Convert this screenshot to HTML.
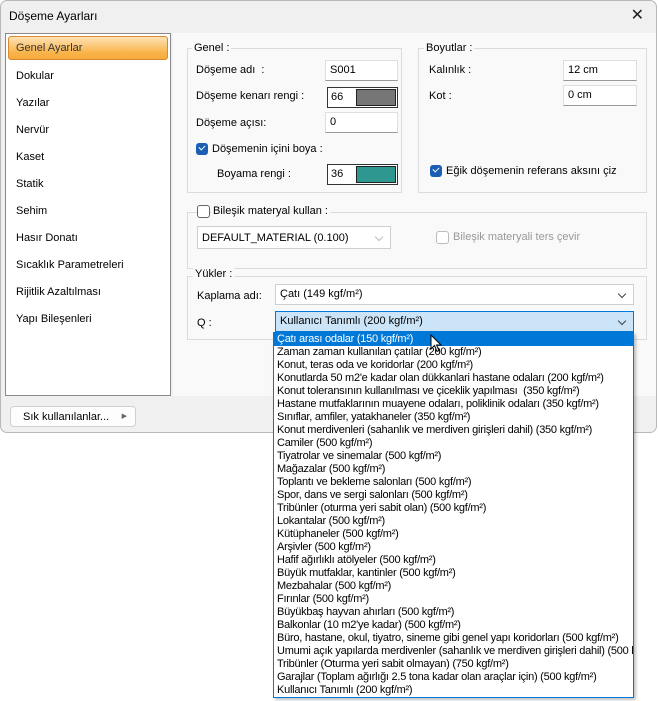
<!DOCTYPE html>
<html><head><meta charset="utf-8"><style>
*{box-sizing:border-box;margin:0;padding:0}
body{width:658px;height:701px;background:#fff;font-family:"Liberation Sans",sans-serif;font-size:11px;color:#000;position:relative;overflow:hidden}
.a{position:absolute}
.win{left:0;top:0;width:657px;height:433px;background:#f0f0f0;border:1px solid #b8b8b8;border-radius:7px;overflow:hidden}
.title{left:8px;top:8px;font-size:12px}
.left{left:4px;top:32px;width:166px;height:363px;background:#fff;border:1px solid #8a8a8a}
.li{position:absolute;left:10px;font-size:11px;color:#000}
.sel{left:2px;top:2px;width:160px;height:24px;border-radius:3px;border:1px solid #d88a30;background:linear-gradient(#fde2b6,#f9b54c 70%,#f7a93a)}
.content{left:172px;top:32px;width:484px;height:363px;background:#f9f9f9}
.grp{position:absolute;border:1px solid #dcdcdc}
.gl{position:absolute;background:#f9f9f9;padding:0 2px;font-size:11px}
.inp{position:absolute;background:#fff;border:1px solid #dedede;border-bottom:1px solid #999;font-size:11px;padding:3px 0 0 4px;height:21px}
.col{position:absolute;background:#fff;border:1px solid #333;height:21px;font-size:11px;padding:3px 0 0 3px}
.sw{position:absolute;right:1px;top:1px;bottom:1px;width:40px;border:1px solid #222}
.cb{position:absolute;width:12px;height:12px;border-radius:3px}
.on{background:#1a5fb4}
.on:after{content:"";position:absolute;left:3px;top:2px;width:5px;height:3px;border-left:1.5px solid #fff;border-bottom:1.5px solid #fff;transform:rotate(-45deg)}
.off{border:1px solid #666;background:#fff}
.combo{position:absolute;background:#fff;border:1px solid #cfcfcf;height:21px;font-size:11px;padding:3px 0 0 4px}
.chev{position:absolute;right:8px;top:6px;width:6px;height:6px;border-right:1px solid #444;border-bottom:1px solid #444;transform:rotate(45deg)}
.list{left:273px;top:332px;width:361px;height:366px;background:#fff;border:1px solid #0078d7;box-shadow:2px 2px 3px rgba(0,0,0,.25);font-size:11px;letter-spacing:-0.25px;overflow:hidden}
.list div{height:13px;line-height:13px;padding-left:3px;white-space:nowrap;overflow:hidden}
.list .h{background:#0078d7;color:#fff}
</style></head><body>
<div class="a win">
 <div class="a title">Döşeme Ayarları</div>
 <div class="a" style="right:12px;top:4px;font-size:16px;color:#222">✕</div>
 <div class="a left">
  <div class="a sel"></div>
  <div class="li" style="top:8px;color:#333">Genel Ayarlar</div>
  <div class="li" style="top:36px">Dokular</div>
  <div class="li" style="top:63px">Yazılar</div>
  <div class="li" style="top:90px">Nervür</div>
  <div class="li" style="top:117px">Kaset</div>
  <div class="li" style="top:144px">Statik</div>
  <div class="li" style="top:171px">Sehim</div>
  <div class="li" style="top:198px">Hasır Donatı</div>
  <div class="li" style="top:225px">Sıcaklık Parametreleri</div>
  <div class="li" style="top:252px">Rijitlik Azaltılması</div>
  <div class="li" style="top:279px">Yapı Bileşenleri</div>
 </div>
 <div class="a content">
  <div class="grp" style="left:14px;top:15px;width:215px;height:145px"></div>
  <div class="gl" style="left:19px;top:9px">Genel :</div>
  <div class="a" style="left:23px;top:31px">Döşeme adı &nbsp;:</div>
  <div class="inp" style="left:152px;top:27px;width:73px">S001</div>
  <div class="a" style="left:23px;top:57px">Döşeme kenarı rengi :</div>
  <div class="col" style="left:154px;top:54px;width:71px">66<div class="sw" style="background:#767676"></div></div>
  <div class="a" style="left:23px;top:84px">Döşeme açısı:</div>
  <div class="inp" style="left:152px;top:79px;width:73px">0</div>
  <div class="cb on" style="left:23px;top:110px"></div>
  <div class="a" style="left:39px;top:110px">Döşemenin içini boya :</div>
  <div class="a" style="left:44px;top:135px">Boyama rengi :</div>
  <div class="col" style="left:154px;top:131px;width:71px">36<div class="sw" style="background:#2e9890"></div></div>

  <div class="grp" style="left:245px;top:15px;width:229px;height:145px"></div>
  <div class="gl" style="left:251px;top:9px">Boyutlar :</div>
  <div class="a" style="left:256px;top:31px">Kalınlık :</div>
  <div class="inp" style="left:390px;top:27px;width:74px">12 cm</div>
  <div class="a" style="left:256px;top:57px">Kot :</div>
  <div class="inp" style="left:390px;top:52px;width:74px">0 cm</div>
  <div class="cb on" style="left:257px;top:132px"></div>
  <div class="a" style="left:273px;top:132px">Eğik döşemenin referans aksını çiz</div>

  <div class="grp" style="left:14px;top:179px;width:460px;height:57px"></div>
  <div class="cb off" style="left:24px;top:172px;width:13px;height:13px"></div>
  <div class="gl" style="left:38px;top:172px">Bileşik materyal kullan :</div>
  <div class="combo" style="left:24px;top:193px;width:194px;height:23px;padding-top:5px">DEFAULT_MATERIAL (0.100)<div class="chev" style="border-color:#bbb;top:7px"></div></div>
  <div class="cb off" style="left:263px;top:198px;width:13px;height:13px;border-color:#bbb"></div>
  <div class="a" style="left:280px;top:198px;color:#999">Bileşik materyali ters çevir</div>

  <div class="grp" style="left:14px;top:243px;width:460px;height:64px"></div>
  <div class="gl" style="left:20px;top:235px">Yükler :</div>
  <div class="a" style="left:24px;top:257px">Kaplama adı:</div>
  <div class="combo" style="left:102px;top:251px;width:359px">Çatı (149 kgf/m²)<div class="chev"></div></div>
  <div class="a" style="left:24px;top:284px">Q :</div>
  <div class="combo" style="left:102px;top:278px;width:359px;background:#cce4f7;border-color:#0078d7">Kullanıcı Tanımlı (200 kgf/m²)<div class="chev"></div></div>
 </div>
 <div class="a" style="left:9px;top:405px;width:126px;height:21px;background:#fdfdfd;border:1px solid #d0d0d0;border-radius:4px;padding:4px 0 0 12px">Sık kullanılanlar...<span style="position:absolute;right:8px;top:5px;font-size:7px;color:#666">▶</span></div>
</div>
<div class="a list">
<div class="h">Çatı arası odalar (150 kgf/m²)</div>
<div>Zaman zaman kullanılan çatılar (200 kgf/m²)</div>
<div>Konut, teras oda ve koridorlar (200 kgf/m²)</div>
<div>Konutlarda 50 m2'e kadar olan dükkanlari hastane odaları (200 kgf/m²)</div>
<div>Konut toleransının kullanılması ve çiceklik yapılması &nbsp;(350 kgf/m²)</div>
<div>Hastane mutfaklarının muayene odaları, poliklinik odaları (350 kgf/m²)</div>
<div>Sınıflar, amfiler, yatakhaneler (350 kgf/m²)</div>
<div>Konut merdivenleri (sahanlık ve merdiven girişleri dahil) (350 kgf/m²)</div>
<div>Camiler (500 kgf/m²)</div>
<div>Tiyatrolar ve sinemalar (500 kgf/m²)</div>
<div>Mağazalar (500 kgf/m²)</div>
<div>Toplantı ve bekleme salonları (500 kgf/m²)</div>
<div>Spor, dans ve sergi salonları (500 kgf/m²)</div>
<div>Tribünler (oturma yeri sabit olan) (500 kgf/m²)</div>
<div>Lokantalar (500 kgf/m²)</div>
<div>Kütüphaneler (500 kgf/m²)</div>
<div>Arşivler (500 kgf/m²)</div>
<div>Hafif ağırlıklı atölyeler (500 kgf/m²)</div>
<div>Büyük mutfaklar, kantinler (500 kgf/m²)</div>
<div>Mezbahalar (500 kgf/m²)</div>
<div>Fırınlar (500 kgf/m²)</div>
<div>Büyükbaş hayvan ahırları (500 kgf/m²)</div>
<div>Balkonlar (10 m2'ye kadar) (500 kgf/m²)</div>
<div>Büro, hastane, okul, tiyatro, sineme gibi genel yapı koridorları (500 kgf/m²)</div>
<div>Umumi açık yapılarda merdivenler (sahanlık ve merdiven girişleri dahil) (500 kgf/m²)</div>
<div>Tribünler (Oturma yeri sabit olmayan) (750 kgf/m²)</div>
<div>Garajlar (Toplam ağırlığı 2.5 tona kadar olan araçlar için) (500 kgf/m²)</div>
<div>Kullanıcı Tanımlı (200 kgf/m²)</div>
</div>
<svg class="a" style="left:430px;top:334px" width="14" height="20" viewBox="0 0 14 20"><path d="M1 1 L1 15 L4.5 11.5 L7 17.5 L9 16.5 L6.5 11 L11 11 Z" fill="#fff" stroke="#000" stroke-width="1"/></svg>
</body></html>
